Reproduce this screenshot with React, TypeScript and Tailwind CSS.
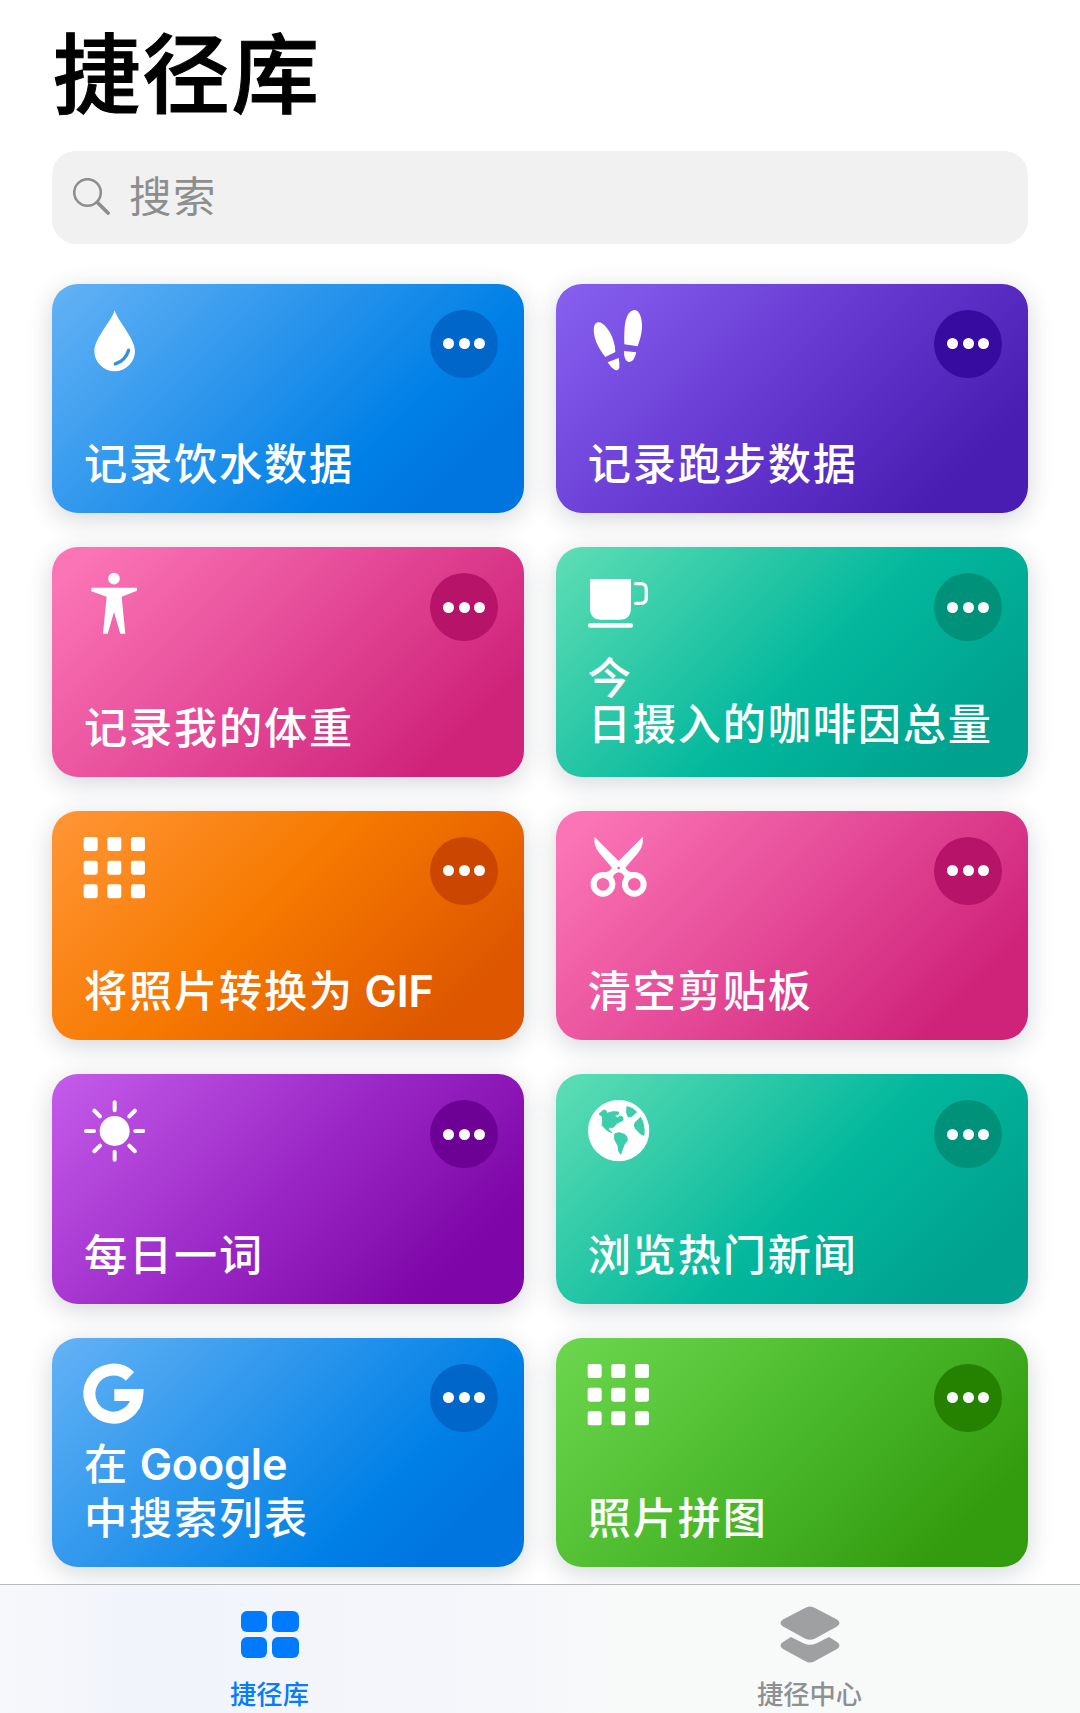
import { ReactNode } from "react";
import clsx from "clsx";

const DropIcon = () => (
  <>
    <path d="M92 1C98 28 153 86 153 123A61 61 0 0 1 31 123C31 86 86 28 92 1Z" />
    <path
      d="M134 121Q124 153 94 162"
      fill="none"
      stroke="#2f93e2"
      strokeWidth="10"
      strokeLinecap="round"
    />
  </>
);

const StepsIcon = () => (
  <>
    <path d="M30 37C45 35 65 60 75 88Q82 108 82 126L52 141C42 128 33 116 25 97C16 73 12 40 30 37Z" />
    <path d="M59 157L92 144Q95 158 94 174Q90 184 81 180Q68 173 59 157Z" />
    <path d="M140 0C155 0 164 28 162 55C161 76 154 94 149 109L109 103C109 88 108 72 110 52C112 25 122 0 140 0Z" />
    <path d="M108 123L145 127Q138 157 123 156Q108 154 108 123Z" />
  </>
);

const PersonIcon = () => (
  <>
    <circle cx="90" cy="17" r="17.5" />
    <path d="M22 44H159V53L113 71L124 182H109L90 117L71 182H57L68 71L22 55Z" />
  </>
);

const CupIcon = () => (
  <>
    <path d="M9 18H126Q129 18 129 21V104Q129 140 95 140H40Q6 140 6 104V21Q6 18 9 18Z" />
    <path
      d="M143 32H158Q175 32 175 50V74Q175 91 158 91H143"
      fill="none"
      stroke="#fff"
      strokeWidth="10"
      strokeLinecap="round"
    />
    <rect y="151" width="135" height="13" rx="6" />
  </>
);

const GridIcon = () => (
  <>
    {[0, 71, 142].map((y) =>
      [0, 71, 142].map((x) => (
        <rect key={`${x}-${y}`} x={x - 1} y={y} width="42" height="42" rx="7" />
      ))
    )}
  </>
);

const ScissorsIcon = () => (
  <>
    <g fill="none" stroke="#fff" strokeWidth="18">
      <circle cx="45" cy="142" r="28" />
      <circle cx="139" cy="142" r="28" />
    </g>
    <path d="M20 0L92 72L164 0Q169 24 150 48L112 92Q119 105 139 107L112 130Q108 108 92 106Q76 108 72 130L45 107Q65 105 72 92L34 48Q15 24 20 0Z" />
    <circle cx="92" cy="93" r="4" fill="#ee5fa6" />
  </>
);

const SunIcon = () => (
  <>
    <circle cx="92" cy="93" r="45" />
    {[0, 45, 90, 135, 180, 225, 270, 315].map((deg) => (
      <rect
        key={deg}
        x="86"
        y="1"
        width="12"
        height="36"
        rx="6"
        transform={`rotate(${deg} 92 93)`}
      />
    ))}
  </>
);

const GlobeIcon = () => (
  <>
    <circle cx="92" cy="92" r="92" />
    <g fill="#3ccdac" stroke="#3ccdac" strokeWidth="3" strokeLinejoin="round">
      <path d="M33 43L44 32L52 30L57 40L74 35L92 36L90 44L80 46L88 54L98 48L105 52L105 61L88 69L76 82L64 82L60 88L72 98L58 92L42 76L44 62L42 48Z" />
      <path d="M117 20L132 25L146 36L133 48L121 51L116 38Z" />
      <path d="M158 52Q171 74 168 106Q158 105 150 94Q136 82 141 68Z" />
      <path d="M80 102Q92 95 104 101Q121 106 117 124Q107 132 104 146L98 163Q90 155 90 136Q76 120 80 102Z" />
    </g>
  </>
);

const GoogleIcon = () => (
  <path
    d="M138 37A72 72 0 1 0 160 93H91"
    fill="none"
    stroke="#fff"
    strokeWidth="36"
  />
);

type Shortcut = {
  lines: string[];
  icon: ReactNode;
  background: string;
  button: string;
  text?: string;
};

const blue =
  "bg-[linear-gradient(135deg,#61b1f5_2%,#2391eb_45%,#0080e6_69%,#0075e0_85%)]";
const pink = "bg-[linear-gradient(135deg,#fb74b5_6%,#e24594_52%,#cf237a_85%)]";
const teal =
  "bg-[linear-gradient(135deg,#5cddb4_2%,#02b79c_54%,#00a28f_86%)]";

const shortcuts: Shortcut[] = [
  {
    lines: ["记录饮水数据"],
    icon: <DropIcon />,
    background: blue,
    button: "bg-[#0066c9]",
  },
  {
    lines: ["记录跑步数据"],
    icon: <StepsIcon />,
    background:
      "bg-[linear-gradient(135deg,#855eee_3%,#673ad2_45%,#491cb2_85%)]",
    button: "bg-[#380ba0]",
  },
  {
    lines: ["记录我的体重"],
    icon: <PersonIcon />,
    background: pink,
    button: "bg-[#b71368]",
  },
  {
    lines: ["今", "日摄入的咖啡因总量"],
    icon: <CupIcon />,
    background: teal,
    button: "bg-[#00917a]",
    text: "leading-[46px] pb-[30px]",
  },
  {
    lines: ["将照片转换为 GIF"],
    icon: <GridIcon />,
    background:
      "bg-[linear-gradient(135deg,#ff9432_3%,#f67900_45%,#de5700_85%)]",
    button: "bg-[#cb4600]",
  },
  {
    lines: ["清空剪贴板"],
    icon: <ScissorsIcon />,
    background: pink,
    button: "bg-[#b71368]",
  },
  {
    lines: ["每日一词"],
    icon: <SunIcon />,
    background:
      "bg-[linear-gradient(135deg,#c35ae9_2%,#9926c4_50%,#7e05a8_85%)]",
    button: "bg-[#6d0095]",
  },
  {
    lines: ["浏览热门新闻"],
    icon: <GlobeIcon />,
    background: teal,
    button: "bg-[#00917a]",
  },
  {
    lines: ["在 Google", "中搜索列表"],
    icon: <GoogleIcon />,
    background: blue,
    button: "bg-[#0066c9]",
    text: "leading-[54px] pb-[22px]",
  },
  {
    lines: ["照片拼图"],
    icon: <GridIcon />,
    background:
      "bg-[linear-gradient(135deg,#6bd64d_2%,#4ab82b_48%,#339c0e_85%)]",
    button: "bg-[#248200]",
  },
];

const Card = ({ lines, icon, background, button, text }: Shortcut) => (
  <div
    className={clsx(
      "flex flex-col justify-between h-[229.6px] rounded-[26px] shadow-[0_6px_26px_rgba(40,50,70,0.2)]",
      background
    )}
  >
    <div className="flex justify-between h-0 pt-[26.2px] pl-[31.8px] pr-[26px]">
      <svg
        viewBox="0 0 184 184"
        className="w-[61.3px] h-[61.3px] shrink-0 overflow-visible"
        fill="#fff"
      >
        {icon}
      </svg>
      <button
        className={clsx(
          "flex items-center justify-center gap-[4.6px] size-[68px] shrink-0 rounded-full",
          button
        )}
      >
        <span className="size-[11px] rounded-full bg-white" />
        <span className="size-[11px] rounded-full bg-white" />
        <span className="size-[11px] rounded-full bg-white" />
      </button>
    </div>
    <div
      className={clsx(
        "pl-[32px] text-[43.2px] tracking-[1.8px] font-medium text-white whitespace-nowrap",
        text ?? "leading-[54px] pb-[22px]"
      )}
    >
      {lines.map((line) => (
        <p key={line}>
          {/* Latin words are set tighter than the Chinese text */}
          {line.split(/( [A-Za-z]+)/).map((part, i) =>
            part.startsWith(" ") ? (
              <span key={i} className="font-semibold tracking-[-0.2px]">
                {part}
              </span>
            ) : (
              part
            )
          )}
        </p>
      ))}
    </div>
  </div>
);

const App = () => {
  return (
    <div className="flex flex-col h-[1713px] overflow-hidden bg-white font-['Inter','Noto_Sans_CJK_SC',sans-serif]">
      <main className="flex flex-col h-[1584px] shrink-0 px-[52px] overflow-hidden">
        <h1 className="h-[151px] pt-[11px] pl-px text-[87.5px] leading-[128px] tracking-[1.8px] font-medium text-black [-webkit-text-stroke:1px_black]">
          捷径库
        </h1>

        {/* Search */}
        <div className="flex items-center h-[93px] shrink-0 pl-[21px] rounded-[24px] bg-[#f1f1f1] text-[#8e8e8f]">
          <svg
            viewBox="0 0 37 37"
            className="w-[37px] h-[37px] mb-[2px]"
            fill="none"
            stroke="currentColor"
          >
            <circle cx="14.5" cy="14.5" r="13.3" strokeWidth="2.6" />
            <path d="M24.5 24.5L35 35" strokeWidth="3.8" strokeLinecap="round" />
          </svg>
          <span className="pl-[19px] pb-[2px] text-[42.5px] leading-[60px] tracking-[1.5px]">
            搜索
          </span>
        </div>

        {/* Shortcuts */}
        <div className="grid grid-cols-2 gap-x-[31.5px] gap-y-[33.9px] pt-[39.6px]">
          {shortcuts.map((shortcut) => (
            <Card key={shortcut.lines[0]} {...shortcut} />
          ))}
        </div>
      </main>

      {/* Tab bar */}
      <nav className="grid grid-cols-2 h-[129px] shrink-0 border-t border-[#b9b9bc] bg-[linear-gradient(90deg,#f7f8fa_0%,#f2f4fc_12%,#f4f6fb_42%,#f8f9f9_56%,#f8f9f9_100%)] text-[26.3px] leading-9">
        <a className="flex flex-col items-center pt-[26px] pr-px font-medium text-[#067cff]">
          <div className="grid grid-cols-2 gap-[5px] w-[58px] h-[47px]">
            <span className="rounded-[6px] bg-[#007bff]" />
            <span className="rounded-[6px] bg-[#007bff]" />
            <span className="rounded-[6px] bg-[#007bff]" />
            <span className="rounded-[6px] bg-[#007bff]" />
          </div>
          <span className="pt-[19px]">捷径库</span>
        </a>
        <a className="flex flex-col items-center pt-[21px] pr-px font-medium text-[#8f9092]">
          <svg viewBox="0 0 60 57" className="w-[60px] h-[57px]" fill="#9fa0a2">
            <path d="M25 2Q30 -1 35 2L57 13.5Q62 17 57 20.5L35 32.5Q30 35 25 32.5L3 20.5Q-2 17 3 13.5Z" />
            <path d="M11 31L24 37.5Q30 40 36 37.5L49 31L57 36Q62 39.500 57 43L35 55Q30 58 25 55L3 43Q-2 39.500 3 36Z" />
          </svg>
          <span className="pt-[14px]">捷径中心</span>
        </a>
      </nav>
    </div>
  );
};

export default App;
